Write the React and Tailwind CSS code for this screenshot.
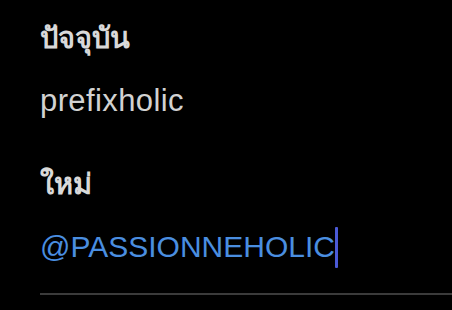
export default function App() {
  return (
    <div className="w-[452px] h-[310px] bg-black overflow-hidden pl-[40px] pt-[20px] font-['Liberation_Sans',sans-serif]">
      <h2 className="text-[29px] leading-[36px] font-bold text-[#d9d9d9]">ปัจจุบัน</h2>
      <p className="mt-[27px] text-[31px] leading-[36px] tracking-[0.4px] text-[#d2d2d2]">prefixholic</p>
      <h2 className="mt-[47px] text-[29px] leading-[36px] font-bold text-[#d9d9d9]">ใหม่</h2>
      <div className="mt-[24px] flex items-center h-[42px]">
        <span className="text-[30px] leading-[36px] text-[#4a8ee0]">@PASSIONNEHOLIC</span>
        <span className="w-[3px] h-[41px] bg-[#4b5ad6] rounded-[1px]" />
      </div>
      <div className="mt-[25px] h-[2px] bg-[#3b3b3b]" />
    </div>
  );
}
